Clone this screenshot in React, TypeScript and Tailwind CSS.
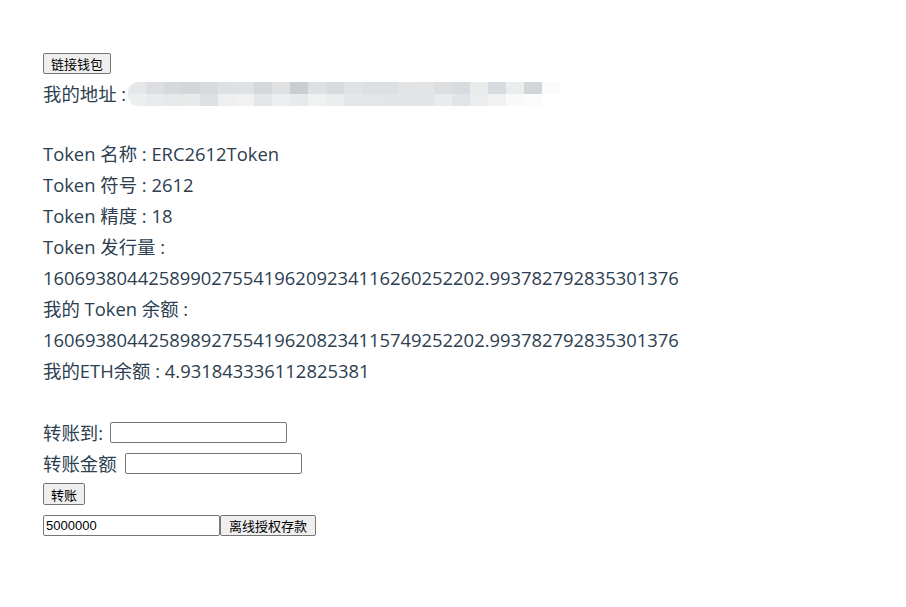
import React from "react";

const mosaic: string[][] = [
  ["#e6e7e9","#dcdee1","#d6d9dc","#d2d6da","#d9dadc","#dde1e5","#dfe2e5","#d4d8dc","#e0e1e2","#c8cdd2","#dde1e4","#d8dadf","#e0e3e4","#dce0e3","#dde0e3","#e2e3e5","#e2e4e5","#dcdedf","#d8dce1","#eaebeb","#d7dbe0","#ebecec","#d2d6da","#fafbfd"],
  ["#eceef0","#e8eaeb","#e6e8ea","#e8eaea","#dde1e4","#eeeff0","#f1f1f2","#e4e7e9","#eceeef","#e8e9eb","#f0f1f1","#ebeced","#e5e6e8","#e4e5e7","#e2e4e6","#e3e4e5","#e2e4e7","#eaebec","#e2e5e8","#ebecee","#f2f1f0","#f8f9fb","#fcfcfd","#ffffff"],
];

export default function App() {
  const font = {
    fontFamily: '"Open Sans", "Noto Sans CJK SC", sans-serif',
  };
  const cjk = { fontFamily: '"Noto Sans CJK SC", sans-serif' };
  return (
    <div className="min-h-[607px] w-[906px] bg-white pl-[43px] pt-[53px] text-[18.4px] leading-[31px] text-[#2c3e50]" style={font}>
      <button className="block h-[21px] rounded-[2px] border border-[#767676] bg-[#efefef] px-[7px] text-[13px] leading-[17px] text-black" style={cjk}>
        链接钱包
      </button>
      <div className="mt-[4px] flex items-center">
        <span>我的地址 :</span>
        <div className="ml-[2px] flex flex-col overflow-hidden rounded-l-[10px] blur-[0.5px]">
          {mosaic.map((row, r) => (
            <div key={r} className="flex">
              {row.map((c, i) => (
                <div key={i} className="h-[12px] w-[18px]" style={{ backgroundColor: c }} />
              ))}
            </div>
          ))}
        </div>
      </div>
      <div className="h-[29px]" />
      <div>Token 名称 : ERC2612Token</div>
      <div>Token 符号 : 2612</div>
      <div>Token 精度 : 18</div>
      <div>Token 发行量 :</div>
      <div>160693804425899027554196209234116260252202.993782792835301376</div>
      <div>我的 Token 余额 :</div>
      <div>160693804425898927554196208234115749252202.993782792835301376</div>
      <div>我的ETH余额 : 4.931843336112825381</div>
      <div className="h-[31px]" />
      <div className="flex items-center">
        <span>转账到:</span>
        <input className="ml-[7px] h-[21px] w-[177px] rounded-[2px] border border-[#767676] bg-white" />
      </div>
      <div className="flex items-center">
        <span>转账金额</span>
        <input className="ml-[8px] h-[21px] w-[177px] rounded-[2px] border border-[#767676] bg-white" />
      </div>
      <button className="mt-[4px] block h-[22px] rounded-[2px] border border-[#767676] bg-[#efefef] px-[7px] text-[13px] leading-[17px] text-black" style={cjk}>
        转账
      </button>
      <div className="mt-[10px] flex items-center">
        <input
          defaultValue="5000000"
          className="h-[21px] w-[177px] rounded-[2px] border border-[#767676] bg-white px-[2px] text-[13px] text-black"
          style={{ fontFamily: '"Liberation Sans", Arial, sans-serif' }}
        />
        <button className="h-[21px] rounded-[2px] border border-[#767676] bg-[#efefef] px-[8px] text-[13px] leading-[17px] text-black" style={cjk}>
          离线授权存款
        </button>
      </div>
    </div>
  );
}
